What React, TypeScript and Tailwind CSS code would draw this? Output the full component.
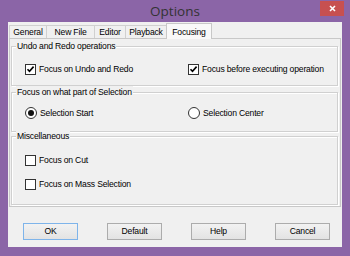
import React from "react";

const font = { fontFamily: '"Liberation Sans", Arial, sans-serif' };
const txt = "text-[8.6px] tracking-[-0.18px] whitespace-nowrap";

function Check({ checked }: { checked: boolean }) {
  return (
    <span className="w-[11px] h-[11px] border border-[#333333] bg-white flex items-center justify-center shrink-0">
      {checked && (
        <svg width="9" height="9" viewBox="0 0 9 9">
          <path d="M1.5 4.2 L3.5 6.3 L7.6 1.6" fill="none" stroke="#000" strokeWidth="1.6" />
        </svg>
      )}
    </span>
  );
}

function Radio({ checked }: { checked: boolean }) {
  return (
    <span className="w-[12px] h-[12px] rounded-full border border-[#333333] bg-white flex items-center justify-center shrink-0">
      {checked && <span className="w-[6px] h-[6px] rounded-full bg-[#111]" />}
    </span>
  );
}

function Group({ title, className, children }: { title: string; className: string; children: React.ReactNode }) {
  return (
    <div className={"relative border border-[#d0d0d0] shadow-[inset_1px_1px_0_#ffffff,1px_1px_0_#ffffff] " + className}>
      <span className={"absolute left-[4px] top-[-7px] bg-[#f0f0f0] px-[1px] leading-[12px] " + txt}>{title}</span>
      {children}
    </div>
  );
}

function Btn({ label, def }: { label: string; def?: boolean }) {
  return (
    <div
      className={
        "w-[55px] h-[17px] flex items-center justify-center bg-gradient-to-b from-[#f2f2f2] to-[#e3e3e3] border " +
        txt +
        " " +
        (def ? "border-[#7eb4ea]" : "border-[#acacac]")
      }
    >
      {label}
    </div>
  );
}

export default function App() {
  const tabs = ["General", "New File", "Editor", "Playback"];
  const widths = ["w-[38px]", "w-[49px]", "w-[32px]", "w-[42px]"];
  return (
    <div className="w-[350px] h-[256px] bg-[#8b65a7] flex flex-col text-black" style={font}>
      <div className="h-[22px] relative flex items-center justify-center">
        <span className="text-[13.5px] text-[#333333] leading-none mt-[1px]" style={{ fontFamily: '"Open Sans", "Liberation Sans", sans-serif' }}>Options</span>
        <div className="absolute right-[6px] top-[1px] w-[24px] h-[15px] bg-[#c75050] flex items-center justify-center">
          <svg width="7" height="7" viewBox="0 0 7 7">
            <path d="M1 1 L6 6 M6 1 L1 6" stroke="#fff" strokeWidth="1.6" />
          </svg>
        </div>
      </div>
      <div className="mx-[8px] mb-[9px] flex-1 bg-[#f0f0f0] flex flex-col">
        <div className="h-[16px] flex items-end pl-[1px]">
          {tabs.map((t, i) => (
            <div
              key={t}
              className={"h-[13px] border border-b-0 border-[#d0d0d0] -mr-[1px] flex items-center justify-center bg-[#f0f0f0] " + txt + " " + widths[i]}
            >
              {t}
            </div>
          ))}
          <div className={"h-[16px] w-[46px] border border-b-0 border-[#c8c8c8] bg-[#f9f9f9] flex items-start pt-[2px] justify-center relative z-10 -mb-[1px] " + txt}>
            Focusing
          </div>
        </div>
        <div className="ml-[1px] mr-[1px] h-[169px] border border-[#c8c8c8] bg-[#f0f0f0] flex flex-col px-[1px] pt-[7px]">
          <Group title="Undo and Redo operations" className="h-[40px] mr-[1px]">
            <div className="flex items-center pt-[16px] pl-[13px]">
              <div className={"flex items-center gap-[3px] w-[163px] " + txt}>
                <Check checked />
                <span>Focus on Undo and Redo</span>
              </div>
              <div className={"flex items-center gap-[3px] " + txt}>
                <Check checked />
                <span>Focus before executing operation</span>
              </div>
            </div>
          </Group>
          <Group title="Focus on what part of Selection" className="h-[40px] mt-[6px] mr-[1px]">
            <div className="flex items-center pt-[14px] pl-[13px]">
              <div className={"flex items-center gap-[3px] w-[163px] " + txt}>
                <Radio checked />
                <span>Selection Start</span>
              </div>
              <div className={"flex items-center gap-[3px] " + txt}>
                <Radio checked={false} />
                <span>Selection Center</span>
              </div>
            </div>
          </Group>
          <Group title="Miscellaneous" className="h-[69px] mt-[4px] mr-[1px]">
            <div className={"flex flex-col pt-[17px] pl-[13px] gap-[11px] " + txt}>
              <div className="flex items-center gap-[3px]">
                <Check checked={false} />
                <span>Focus on Cut</span>
              </div>
              <div className="flex items-center gap-[3px]">
                <Check checked={false} />
                <span>Focus on Mass Selection</span>
              </div>
            </div>
          </Group>
        </div>
        <div className="flex pl-[15px] pt-[16px] gap-[29px]">
          <Btn label="OK" def />
          <Btn label="Default" />
          <Btn label="Help" />
          <Btn label="Cancel" />
        </div>
      </div>
    </div>
  );
}
